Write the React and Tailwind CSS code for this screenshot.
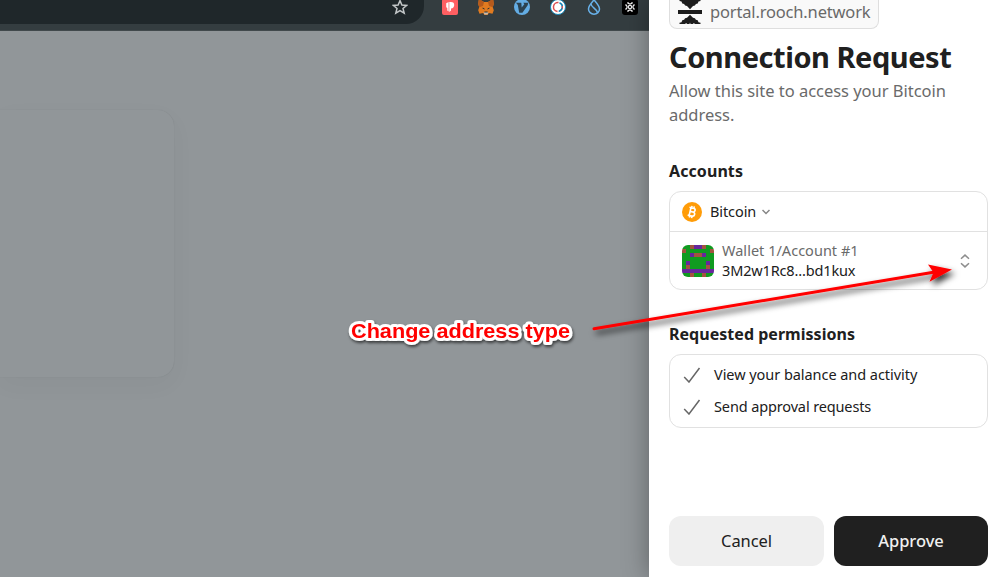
import React from "react";

const IDENTICON = [
  "GGRPPRGG",
  "RGGGGGGR",
  "GGPRRPGG",
  "GGGGGGGG",
  "GPGGGGPG",
  "GRGGGGRG",
  "PPPPPPPP",
  "GGRGGRGG",
];
const CELL = { G: "#109b20", P: "#66279c", R: "#a2543f" };

function Identicon() {
  return (
    <svg viewBox="0 0 8 8" className="size-8 shrink-0 rounded-md" shapeRendering="crispEdges">
      {IDENTICON.flatMap((row, y) =>
        [...row].map((c, x) => (
          <rect key={`${x}-${y}`} x={x} y={y} width="1" height="1" fill={CELL[c]} />
        ))
      )}
    </svg>
  );
}

function Toolbar() {
  return (
    <div className="flex h-[31px] border-b border-[#41494c] bg-[#343d40]">
      <div className="flex h-[24px] w-[424px] justify-end rounded-br-[18px] bg-[#1f272a] pr-4">
        <svg className="-mt-px size-4" viewBox="0 0 16 16" fill="none" stroke="#c3c7c8" strokeWidth="1.5">
          <path d="M8 1.6 9.9 6 14.7 6.4 11 9.5 12.2 14.2 8 11.7 3.8 14.2 5 9.5 1.3 6.4 6.1 6Z" />
        </svg>
      </div>
      <div className="-mt-px ml-[18px] flex h-4 gap-5">
        <svg className="size-4" viewBox="0 0 16 16">
          <rect width="16" height="16" rx="2" fill="#ff5f62" />
          <path d="M4.200 4.200 6.600 3v9.600L5.300 11.500V9L4.200 8.200ZM7.300 3h1.500c2.600 0 3.400 1.300 3.400 3.100S11 9.600 9 9.600v2L7.300 13Z" fill="#fff" />
        </svg>
        <svg className="size-4" viewBox="0 0 16 16">
          <path d="M.8 0 6 3h4l5.200-3 .6 5-1 3.200 1 3-1.300 3.600-3.700-.8L9.600 16H6.400L5.200 14l-3.700.8L.2 11.200l1-3L.2 5Z" fill="#e17b20" />
          <path d="M1 0 6 3 5 7 1.200 8.200.2 5ZM15 0 10 3l1 4 3.800 1.200 1-3.200Z" fill="#b65a1c" />
          <path d="M5.600 13h4.800l-.8 2.500H6.400Z" fill="#c9bcae" />
          <path d="m3.700 8.700 2.400.4.600 1.600ZM12.300 8.700l-2.400.4-.6 1.600ZM6.500 12.400h3l.3 1.200H6.200Z" fill="#293033" />
        </svg>
        <svg className="size-4" viewBox="0 0 16 16">
          <circle cx="8" cy="8" r="8" fill="#64ade4" />
          <path d="M2 3.800h5.300l.4 4.700 2.600-3.300-1-1.400h5l-.6 2.500L8.400 13.800H5.200L3.800 5.900Z" fill="#2c4250" />
        </svg>
        <svg className="size-4" viewBox="0 0 16 16">
          <circle cx="8" cy="8" r="7.500" fill="#fff" stroke="#1685b5" />
          <path d="M9.500 3.800a4.500 4.500 0 0 1-.8 8.600" fill="none" stroke="#1783b5" strokeWidth="1.500" />
          <path d="M8.500 3.500a4.500 4.500 0 0 0-1 9" fill="none" stroke="#d94e50" strokeWidth="1.500" />
          <path d="M12.400 7v2.500" stroke="#d94e50" strokeWidth="1.200" />
        </svg>
        <svg className="size-4" viewBox="0 0 16 16" fill="none" stroke="#68b1e9" strokeWidth="1.500">
          <path d="M8 .8C5.700 3.700 2.500 6.800 2.500 9.900a5.500 5.300 0 0 0 11 0C13.500 6.800 10.300 3.700 8 .8Z" />
          <path d="M5 5c.5 3.600 5.500 4.500 6.500 8.500" />
        </svg>
        <svg className="size-4" viewBox="0 0 16 16">
          <rect width="16" height="16" rx="3" fill="#000" />
          <g fill="none" stroke="#eee" strokeWidth="1.200">
            <circle cx="8" cy="8" r="1.700" />
            <path d="M6 3v1.300L8 5.100l2-.8V3M6 13v-1.300l2-.8 2 .8V13M3 6h1.400l.8 2-.8 2H3M13 6h-1.400l-.8 2 .8 2H13" />
          </g>
        </svg>
      </div>
    </div>
  );
}

function Check() {
  return (
    <svg className="h-4 w-[18px] shrink-0" viewBox="0 0 18 16" fill="none" stroke="#666" strokeWidth="1.500">
      <path d="M1.200 10 6 15 16.500 1" />
    </svg>
  );
}

function Panel() {
  return (
    <div className="relative h-[577px] w-[354px] overflow-hidden bg-white pl-5 text-[#202020] shadow-[0_0_24px_rgba(0,0,0,0.35)]">
      <div className="flex h-[29px] w-[210px] items-start rounded-b-lg border border-t-0 border-[#dedede] bg-[#f9f9f9] pl-2">
        <svg className="h-6 w-6 shrink-0" viewBox="0 0 24 24" fill="#1c1c1c">
          <path d="M0 10h24v4H0ZM1.500 0h21v1l-2 .5-.8 2-1.800.5-1 1.500-1.900.5L12 9.300 9 6 7.100 5.500 6.100 4 4.300 3.500l-.8-2-2-.5ZM12 14.700l3 3 1.900.5 1 1.500 1.800.5.800 2 2 .5V24H17l-1.200-1-.8 1h-2.500L12 22.500 11.500 24H9l-.8-1L7 24H1.500v-1.300l2-.5.8-2 1.800-.5 1-1.500 1.900-.5Z" />
        </svg>
        <span className="ml-[8px] text-[16.500px] leading-[24px] tracking-[-0.170px] whitespace-nowrap text-[#696969]">portal.rooch.network</span>
      </div>
      <h1 className="mt-[10px] h-9 text-[29px] leading-9 font-bold tracking-[-0.450px] whitespace-nowrap">Connection Request</h1>
      <p className="mt-1 text-[16.500px] leading-6 tracking-[-0.030px] text-[#6a6a6a]">
        Allow this site to access your Bitcoin<br />address.
      </p>
      <h2 className="mt-8 text-[16px] leading-6 font-bold tracking-[0.080px]">Accounts</h2>
      <div className="mt-2 h-[99px] w-[319px] rounded-xl border border-[#e1e1e1]">
        <div className="flex h-10 items-center border-b border-[#e1e1e1] pl-3">
          <svg className="size-5" viewBox="0 0 20 20">
            <circle cx="10" cy="10" r="10" fill="#ff9c08" />
            <g transform="rotate(13 10 10)" fill="none" stroke="#fff" strokeWidth="1.600">
              <path d="M6.500 6h4.200c2.600 0 2.600 3.800 0 3.800H8M10.700 9.800c3.200 0 3.200 4.200 0 4.200H6.500M8 6v8M8.700 4v2M11 4v2M8.700 14v2M11 14v2" />
            </g>
          </svg>
          <span className="ml-2 text-[14.500px] tracking-[-0.100px]">Bitcoin</span>
          <svg className="ml-[6px] h-[6px] w-2" viewBox="0 0 8 6" fill="none" stroke="#858585" strokeWidth="1.500"><path d="m.5 1 3.500 3.500L7.500 1" /></svg>
        </div>
        <div className="flex h-[57px] items-center pl-3">
          <Identicon />
          <div className="mb-[2px] ml-2 text-[14.500px] leading-5 whitespace-nowrap">
            <div className="tracking-[0.020px] text-[#6a6a6a]">Wallet 1/Account #1</div>
            <div className="tracking-[-0.150px]">3M2w1Rc8...bd1kux</div>
          </div>
          <svg className="mr-[17px] ml-auto h-[14px] w-[10px]" viewBox="0 0 10 14" fill="none" stroke="#8d8d8d" strokeWidth="1.500"><path d="m1 4.800 4-3.700 4 3.700M1 9.200l4 3.700 4-3.700" /></svg>
        </div>
      </div>
      <h2 className="mt-8 text-[16px] leading-6 font-bold tracking-[0.030px]">Requested permissions</h2>
      <div className="mt-2 flex h-[74px] w-[319px] flex-col rounded-xl border border-[#e1e1e1] pt-1 pl-[13px]">
        <div className="flex h-8 items-center text-[14.500px] tracking-[-0.050px]">
          <Check />
          <span className="ml-[13px]">View your balance and activity</span>
        </div>
        <div className="flex h-8 items-center text-[14.500px] tracking-[-0.130px]">
          <Check />
          <span className="ml-[13px]">Send approval requests</span>
        </div>
      </div>
      <div className="mt-[88px] flex gap-[10px] text-[16.500px]">
        <button className="h-[50px] w-[155px] rounded-xl bg-[#efefef] tracking-[-0.100px]">Cancel</button>
        <button className="h-[50px] w-[154px] rounded-xl bg-[#202020] font-medium tracking-[-0.050px] text-[#f0f0f0]">Approve</button>
      </div>
    </div>
  );
}

export default function App() {
  return (
    <div className="relative flex h-[577px] w-[1003px] overflow-hidden bg-[#919699] font-['Noto_Sans','Open_Sans',sans-serif]">
      <div className="w-[649px] shrink-0">
        <Toolbar />
        <div className="mt-[79px] h-[267px] w-[174px] rounded-r-2xl bg-[#919699] shadow-[0_8px_24px_rgba(0,0,0,0.035),0_0_1px_rgba(0,0,0,0.12)]" />
      </div>
      <Panel />
      <svg className="pointer-events-none absolute inset-0" width="1003" height="577" viewBox="0 0 1003 577">
        <defs>
          <filter id="shadow" x="-20%" y="-50%" width="140%" height="220%">
            <feDropShadow dx="3" dy="4" stdDeviation="3" floodColor="#000" floodOpacity="0.8" />
          </filter>
          <filter id="labelShadow" x="-10%" y="-50%" width="120%" height="220%">
            <feDropShadow dx="1" dy="2" stdDeviation="1.500" floodColor="#000" floodOpacity="0.6" />
          </filter>
        </defs>
        <g filter="url(#shadow)">
          <path d="M594 328.800 935 272" stroke="#f00" strokeWidth="3" strokeLinecap="round" />
          <path d="m952 269.500-24-5 5.500 8-4 9.300Z" fill="#f00" />
        </g>
        <text x="351" y="338" className="font-['Liberation_Sans',Arial,sans-serif] text-[21px] font-bold" fill="#f00" stroke="#fff" strokeWidth="6" strokeLinejoin="round" paintOrder="stroke" filter="url(#labelShadow)" textLength="219" lengthAdjust="spacingAndGlyphs">Change address type</text>
      </svg>
    </div>
  );
}
